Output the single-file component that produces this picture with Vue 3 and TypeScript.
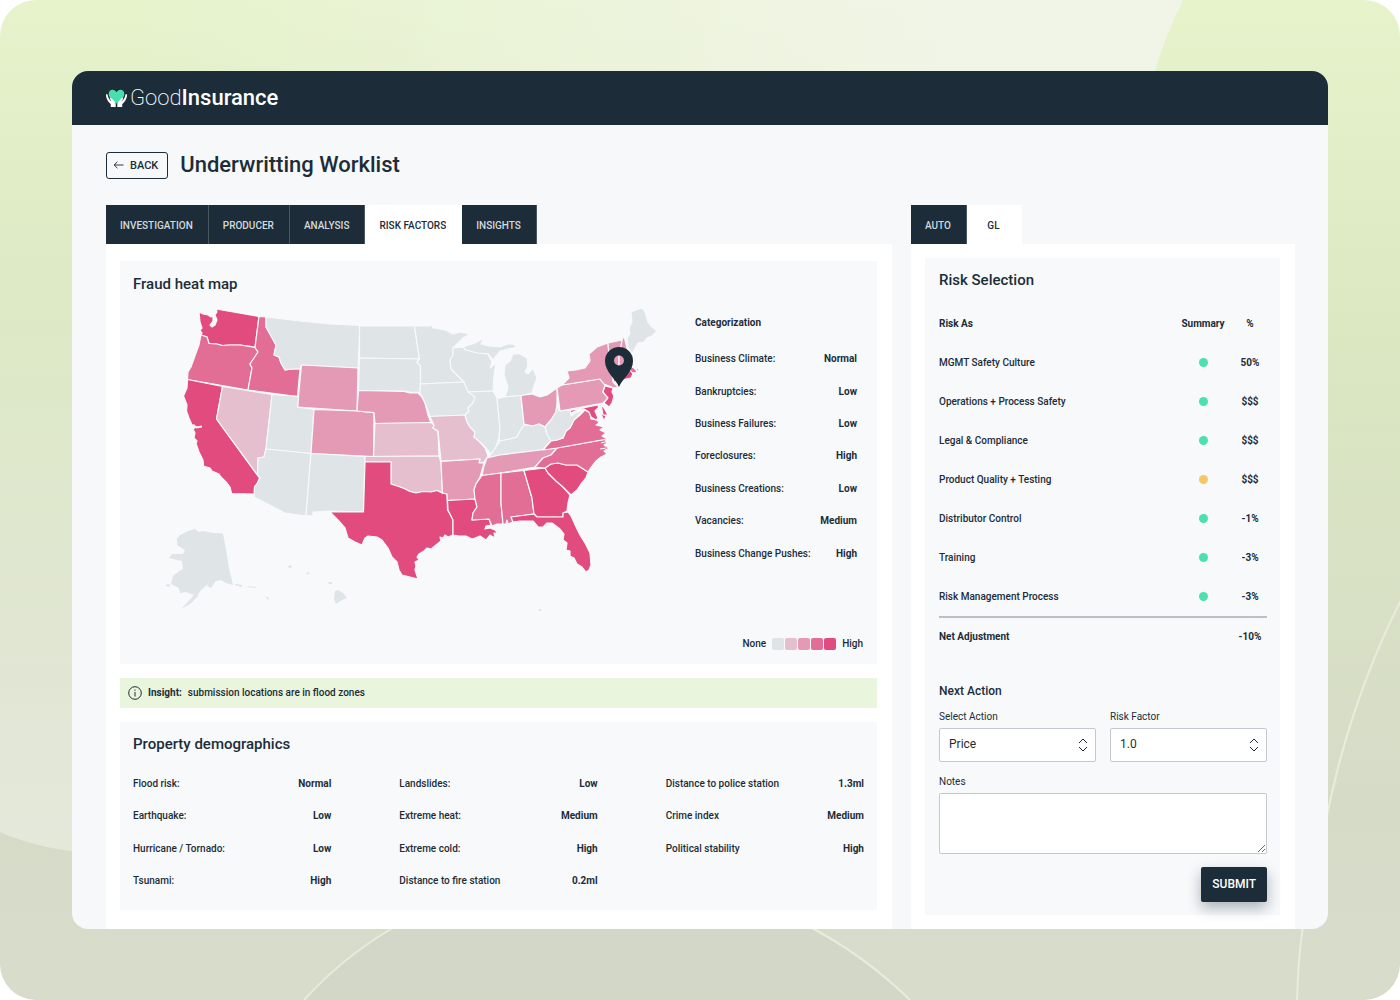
<script setup lang="ts">
import { ref } from 'vue'

interface Pair {
  label: string
  value: string
}

interface RiskRow {
  name: string
  status: 'good' | 'warn'
  value: string
}

interface Region {
  id: string
  level: 0 | 1 | 2 | 3 | 4
  d: string
}

const mainTabs = ['Investigation', 'Producer', 'Analysis', 'Risk factors', 'Insights']
const activeMain = ref('Risk factors')
const sideTabs = ['Auto', 'GL']
const activeSide = ref('GL')

const action = ref('Price')
const factor = ref('1.0')
const notes = ref('')

const categories: Pair[] = [
  { label: 'Business Climate:', value: 'Normal' },
  { label: 'Bankruptcies:', value: 'Low' },
  { label: 'Business Failures:', value: 'Low' },
  { label: 'Foreclosures:', value: 'High' },
  { label: 'Business Creations:', value: 'Low' },
  { label: 'Vacancies:', value: 'Medium' },
  { label: 'Business Change Pushes:', value: 'High' },
]

const demographics: Pair[] = [
  { label: 'Flood risk:', value: 'Normal' },
  { label: 'Earthquake:', value: 'Low' },
  { label: 'Hurricane / Tornado:', value: 'Low' },
  { label: 'Tsunami:', value: 'High' },
  { label: 'Landslides:', value: 'Low' },
  { label: 'Extreme heat:', value: 'Medium' },
  { label: 'Extreme cold:', value: 'High' },
  { label: 'Distance to fire station', value: '0.2ml' },
  { label: 'Distance to police station', value: '1.3ml' },
  { label: 'Crime index', value: 'Medium' },
  { label: 'Political stability', value: 'High' },
]

const risks: RiskRow[] = [
  { name: 'MGMT Safety Culture', status: 'good', value: '50%' },
  { name: 'Operations + Process Safety', status: 'good', value: '$$$' },
  { name: 'Legal & Compliance', status: 'good', value: '$$$' },
  { name: 'Product Quality + Testing', status: 'warn', value: '$$$' },
  { name: 'Distributor Control', status: 'good', value: '-1%' },
  { name: 'Training', status: 'good', value: '-3%' },
  { name: 'Risk Management Process', status: 'good', value: '-3%' },
]

const levels = [0, 1, 2, 3, 4]

const regions: Region[] = [
  { id: 'WA', level: 4, d: 'M199 312L203 314 208 315 211 317 213 316 213 321 210 325 212 327 215 325 217 320 215 315 217 312 216 309 259 316.5 255 347.5 249 346 240 345 230 345 222 345.5 217 344 209 343.5 207 337 201 335 202 333 200 330 202 328 200 322Z' },
  { id: 'OR', level: 3, d: 'M201 335L207 337 209 343.5 217 344 222 345.5 230 345 240 345 255 347.5 258 352 255 357 250 364 252 368 248 390 187.5 379.5 188 372 191 367 196 353 199 345Z' },
  { id: 'CA', level: 4, d: 'M187.5 379.5L222.5 386.5 216.5 419 259.5 478 257 484 254.5 487 254.5 494 231.5 493.5 230 487 227 483 221 477 219 474 212 471 210 468 203.5 466 203 460 199 452 196 443.5 197 441 194 438 195 433 193 429 196 427 192 425 189 418 186.5 411 187 405 183.5 396 187 388Z' },
  { id: 'ID', level: 3, d: 'M259 316.5L266 317 266 327 271 336 276 345 274 355 279 357 281 363 285 370 292 369 298 369 300 368.5 297.5 396.5 248 390 252 368 250 364 258 352 255 347.5Z' },
  { id: 'NV', level: 1, d: 'M222.5 386.5L272 394.5 266 449 264 457 258 458 257.5 475 216.5 419Z' },
  { id: 'MT', level: 0, d: 'M266 317L300 321 330 324 360 325.5 358 368 301.5 365 300 368.5 298 369 292 369 285 370 281 363 279 357 274 355 276 345 271 336 266 327Z' },
  { id: 'WY', level: 2, d: 'M301.5 365L358 368 357 411 297.5 407Z' },
  { id: 'UT', level: 0, d: 'M272 394.5L298.5 396.5 297.5 407 314 409.5 311 453.5 266 449Z' },
  { id: 'CO', level: 2, d: 'M314 409.5L357 411 374 412.7 373.5 456.5 311 453.5Z' },
  { id: 'AZ', level: 0, d: 'M266 449L311 453.5 306 516 285 513 254 497 254.5 487 257 484 260 478 257.5 475 258 458 264 457Z' },
  { id: 'NM', level: 0, d: 'M311 453.5L365 456.5 363.5 512 330 511 313 512 313 516 306 515.5Z' },
  { id: 'ND', level: 0, d: 'M359.5 326L414.5 326 416 337 419.5 359 359.5 358Z' },
  { id: 'SD', level: 0, d: 'M359.5 358L419.5 359 417 362 420.5 366 420.5 384 420 392.5 410 392 405 391 358.5 390.5Z' },
  { id: 'NE', level: 2, d: 'M358.5 390.5L404 391.5 410 393 418 393 422 397 425 403 428 415 431 423 375 423.5 374 412.7 357 411Z' },
  { id: 'KS', level: 1, d: 'M375 423.5L431 422.5 434 425 433 428 438 431.5 439 456 373.5 456.5Z' },
  { id: 'OK', level: 1, d: 'M365 456.5L439 456 441 463 442.5 493 437 490.5 431 492 423 491.5 416 493 410 491.5 405 489 400 487 391 484 391 462 365 462Z' },
  { id: 'TX', level: 4, d: 'M365 462L391 462 391 484 400 487 405 489 410 491.5 416 493 423 491.5 431 492 437 490.5 442 493 447 494 447.5 510 450 514 453 520 453 535 448 537 445 535 443 538 440 537 441 541 436 545 431 549 427 548 424 551 419 554 417 557 419 560 415 562 416 566 415 570 418 579 410 577 402 575 399 570 397 562 392 557 388 548 382 540 377 537 368 536 365 538 362 545 355 542 348 538 345 528 338 520 330 512 363.5 512Z' },
  { id: 'MN', level: 0, d: 'M414.5 326L430 326 431.5 324 433 328 440 329 446.5 330.5 453 334 460 332 470 334 463 338 458 343 453 348 453 355 450 360 451 369 458 376 464 382 420.5 384 420.5 366 417 362 419.5 359Z' },
  { id: 'IA', level: 0, d: 'M420.5 384L464 382 467 388 470 392 475 397 473 403 468 408 469 411 465 415 430 416.5 425 403 420 392.5Z' },
  { id: 'MO', level: 1, d: 'M430 416.5L465 415 467 422 470 427 475 432 474 437 480 442 485 448 488 456 484 462 479 463 480 459 441 461 438 431 433 428 434 425Z' },
  { id: 'AR', level: 2, d: 'M441 461.5L480 459 479 463 484 463 482 470 480 477 476 484 474 490 475 499 447.5 500.5 447 494 442.5 493Z' },
  { id: 'LA', level: 4, d: 'M447.5 500.5L475 499 477 507 473 513 472 520 489 519 491 525 486 526 485 529 490 528 495 530 498 533 494 533 495 538 490 535 486 540 480 536 475 538 472 539 466 536 459 536 453 535 453 520 448 510Z' },
  { id: 'WI', level: 0, d: 'M453 348L463 347 466 350 478 353 488 354 490 358 492 362 490 368 496 363 494 375 493 391 468 392 464 382 458 376 451 369 450 360 453 355Z' },
  { id: 'MIU', level: 0, d: 'M463 347L475 343 484 338 481 344 489 346 500 347 507 344 513 344 517 347 508 349 500 351 496 356 493 360 488 354 478 353 466 350Z' },
  { id: 'MI', level: 0, d: 'M505 397L508 387 504 375 505 365 510 361 513 354 520 354 527 358 528 366 525 372 528 374 533 368 537 378 534 386 532 393 521 395.5Z' },
  { id: 'IL', level: 0, d: 'M468 392L493 391 497 398 500 428 499 438 496 447 491 454 487 449 480 442 474 437 475 432 470 427 467 422 465 415 469 411 468 408 473 403 475 397Z' },
  { id: 'IN', level: 0, d: 'M497 399L504 397 521 395.5 524 425 520 431 517 437 510 439 500 441 499 438 500 428Z' },
  { id: 'OH', level: 2, d: 'M521 395.5L532 394 540 397 547 395 557 388 557 403 556 412 551 420 545 427 539 424 533 426 524 424Z' },
  { id: 'KY', level: 0, d: 'M488 458L491 454 496 447 500 441 510 439 517 437 520 431 524 425 533 426 539 424 545 427 547 434 551 440 543 449.5 500 455Z' },
  { id: 'TN', level: 2, d: 'M487 458L500 455 557 448 551 455 543 458 535 467 501 473 482 475.5 484 466Z' },
  { id: 'MS', level: 3, d: 'M482 475.5L501 473 501 503 503 524 497 524 492 526 489 519 472 520 473 513 477 507 475 499 474 490 476 484Z' },
  { id: 'AL', level: 3, d: 'M501 473L524 470.5 532 498 534 514 511 517 513 522 508 524 507 520 506 524 503 524 501 503Z' },
  { id: 'GA', level: 4, d: 'M524 470.5L545 468 548 473 556 481 563 487 570 495 568 503 567 511 563 513 563 517 537 517 534 514 532 498Z' },
  { id: 'FL', level: 4, d: 'M511 517L534 514 537 517 563 517 563 513 568 512 571 516 577 529 580 535 585 543 590 553 591 565 589 570 586 572 582 567 577 564 574 558 570 556 570 551 566 550 567 543 563 540 564 534 560 529 552 523 547 523 543 527 538 527 533 521 527 521 520 521 513 522Z' },
  { id: 'SC', level: 4, d: 'M545 468L551 464 558 463 566 465 577 465 588 472 586 478 581 484 577 490 571 495 563 487 556 481 548 473Z' },
  { id: 'NC', level: 3, d: 'M557 448L605 439.5 607 443 604 445 609 448 604 451 607 454 601 457 596 461 592 466 588 472 577 465 566 465 558 463 551 464 545 468 535 467 543 458 551 455Z' },
  { id: 'VA', level: 3, d: 'M543 450L551 441 557 440 563 438 566 431 570 428 574 420 580 415 585 410 590 413 591 419 597 420 599 423 596 425 604 427 600 430 606 433 602 436 607 439 557 448Z' },
  { id: 'WV', level: 0, d: 'M557 405L559 411 570 410 571 416 575 413 583 410 578 416 574 420 570 428 566 431 563 438 557 440 551 441 547 434 545 427 551 420 556 412Z' },
  { id: 'PA', level: 2, d: 'M557 388L562 385 600 379 605 385 603 392 608 398 603 403 560 411Z' },
  { id: 'NY', level: 2, d: 'M562 385L569 378 567 371 576 370 585 368 590 361 589 354 597 347 608 343 609 355 612 366 613 382 618 387 614 388 604 384 600 379Z' },
  { id: 'NJ', level: 4, d: 'M605 386L613 388 612 392 614 396 612 403 609 407 604 403 608 398 603 392Z' },
  { id: 'MD', level: 4, d: 'M570 410.5L598 405 600 412 606 416 604 421 601 414 598 408 595 411 598 418 596 420 591 417 589 412 584 409 577 410 571 413Z' },
  { id: 'DE', level: 4, d: 'M601 404L604 408 608 415 603 415Z' },
  { id: 'VT', level: 2, d: 'M608 343L622 340 621 347 619 353 619 369 612 369 609 355Z' },
  { id: 'NH', level: 2, d: 'M622 340L624 336 628 352 631 366 619 369 619 353 621 347Z' },
  { id: 'MA', level: 3, d: 'M612 369L630 366 634 368 637 371 636 366 639 370 635 373 630 372 612 375Z' },
  { id: 'CT', level: 4, d: 'M612 375L630 370 633 374 631 378 626 379 614 382Z' },
  { id: 'ME', level: 0, d: 'M627 338L630 334 629 328 632 322 631 312 636 310 642 308 645 312 648 322 651 326 657 331 652 336 647 338 644 342 638 343 635 348 632 354 628 347Z' },
]

const islands = [
  'M177 539L180 535 184 533 188 531 195 529 199 532 203 531 213 533 223 533.500 226 550 229 568 233 585 226 583 221 580 216 581 211 588 207 586 209 583 201 590 197 596 200 594 190 604 181 609 187 603 194 595 186 592 180 593 179 588 171 584 173 576 178 572 183 569 182 561 169 558 172 554 183 554 185 550 177 545Z',
  'M335 591L338 590 343 593 347 598 340 601 336 604 334 599Z',
  'M288 566l3 -1 1 2 -3 1ZM306 574l2 -2 2 1 -3 2ZM328 582l4 0 0 2 -3 0ZM170 584l-5 1 4 2ZM235 584l7 1 0 2 -7 -2ZM247 586l9 1 0 1 -8 -1ZM265 596l4 2 -1 2ZM539 609l2 0 0 2 -2 0Z',
]
</script>

<template>
  <div class="stage">
    <svg class="backdrop" viewBox="0 0 1400 1000" preserveAspectRatio="none" aria-hidden="true">
      <defs>
        <linearGradient id="base" x1="0" y1="0" x2="0" y2="1">
          <stop offset="0" stop-color="#e6f3cb" />
          <stop offset="0.35" stop-color="#dae7c1" />
          <stop offset="0.8" stop-color="#d6dbc8" />
          <stop offset="1" stop-color="#d8dccb" />
        </linearGradient>
        <linearGradient id="disc" x1="0" y1="0" x2="0" y2="1">
          <stop offset="0" stop-color="#eef1e6" stop-opacity="0" />
          <stop offset="1" stop-color="#eef1e6" stop-opacity="0.6" />
        </linearGradient>
        <linearGradient id="glow" x1="0" y1="0" x2="1" y2="0">
          <stop offset="0.1" stop-color="#f2f5ea" stop-opacity="0" />
          <stop offset="0.8" stop-color="#f2f5ea" stop-opacity="0.9" />
        </linearGradient>
      </defs>
      <rect width="1400" height="1000" fill="url(#base)" />
      <path d="M0 0H1183Q1165 36 1152 80V300H0Z" fill="url(#glow)" />
      <path d="M0 200V832Q36 848 80 852V200Z" fill="url(#disc)" />
      <path d="M304 1000Q344 956 396 926H808Q864 955 910 1000Z" fill="#cdd1c0" opacity="0.45" />
      <g fill="none" stroke="#e9ecda" stroke-width="2">
        <path d="M304 1000Q344 956 396 926" />
        <path d="M808 926Q864 955 910 1000" />
        <path d="M1297 1000Q1298 960 1303 926" />
        <path d="M1326 820Q1350 700 1402 598" />
      </g>
    </svg>

    <div class="window">
      <header class="topbar">
        <a class="brand" href="#">
          <svg class="brand-mark" viewBox="0 0 21 19" aria-hidden="true">
            <path d="M10.5 14.5C5 10.5 2.700 7.800 2.700 4.900 2.700 2.400 4.500.8 6.600.8c1.700 0 3.100.9 3.900 2.400C11.300 1.700 12.700.8 14.400.8c2.100 0 3.900 1.600 3.900 4.100 0 2.900-2.300 5.600-7.800 9.600Z" fill="#47dfae" />
            <path d="M.7 5C-.2 5.300 0 6.800.3 8.200c.6 2.600 1.900 4.700 4.400 6.700L4.800 18h4.900v-2.600c0-1.600-.6-2.500-1.600-3.400L5.200 9c-.9-.8-1.800.1-1.200 1l1.600 2.500C3.400 11 2.200 9 1.600 5.700 1.500 5.100 1 4.900.7 5Z" fill="#fff" />
            <path d="M20.300 5c.9.3.7 1.800.4 3.200-.6 2.600-1.900 4.700-4.400 6.700l-.1 3.100h-4.900v-2.600c0-1.600.6-2.500 1.600-3.400l2.900-3c.9-.8 1.800.1 1.200 1l-1.600 2.500c2.200-1.500 3.400-3.500 4-6.800.1-.6.600-.8.900-.7Z" fill="#fff" />
          </svg>
          <span class="brand-name"><span class="thin">Good</span><span class="strong">Insurance</span></span>
        </a>
      </header>

      <main class="content">
        <div class="title-row">
          <button type="button" class="back">
            <svg viewBox="0 0 12 10" aria-hidden="true">
              <path d="M11.500 5H1.200M4.800 1.500L1.200 5l3.600 3.500" fill="none" stroke="currentColor" />
            </svg>
            BACK
          </button>
          <h1>Underwritting Worklist</h1>
        </div>

        <div class="columns">
          <section class="column">
            <nav class="tabs">
              <button
                v-for="tab in mainTabs"
                :key="tab"
                type="button"
                class="tab"
                :class="{ active: tab === activeMain }"
                @click="activeMain = tab"
              >{{ tab.toUpperCase() }}</button>
            </nav>
            <div class="panel main-panel">
              <section class="card map-card">
                <h2>Fraud heat map</h2>
                <div class="map-grid">
                  <svg class="map" viewBox="133 300 548 314" role="img" aria-label="Fraud heat map of the United States">
                    <path v-for="r in regions" :key="r.id" :d="r.d" :class="['region', `fill-${r.level}`]" />
                    <path v-for="d in islands" :key="d" :d="d" class="fill-0" />
                    <path d="M185 426L194 425 196 427 202 426M202 427L196 428" class="inlet" />
                    <path d="M600 406L599 412 602 422M609 441L601 443M606 448L600 449" class="inlet" />
                    <path
                      fill-rule="evenodd"
                      d="M619 387C616 379 605 372 605 361a14 14 0 0 1 28 0C633 372 622 379 619 387ZM619 355.500a5 5 0 1 0 0 10 5 5 0 0 0 0-10Z"
                      class="pin"
                    />
                  </svg>
                  <div class="categories">
                    <h3>Categorization</h3>
                    <dl>
                      <div v-for="c in categories" :key="c.label" class="pair">
                        <dt>{{ c.label }}</dt>
                        <dd>{{ c.value }}</dd>
                      </div>
                    </dl>
                  </div>
                </div>
                <div class="legend">
                  <span>None</span>
                  <span class="scale"><i v-for="n in levels" :key="n" :class="`swatch-${n}`"></i></span>
                  <span>High</span>
                </div>
              </section>

              <p class="insight">
                <svg viewBox="0 0 14 14" aria-hidden="true">
                  <circle cx="7" cy="7" r="6.300" fill="none" stroke="currentColor" />
                  <path d="M7 6v4.500M7 3.500v1.300" stroke="currentColor" />
                </svg>
                <strong>Insight:</strong>
                <span>submission locations are in flood zones</span>
              </p>

              <section class="card demo-card">
                <h2>Property demographics</h2>
                <dl class="demo-grid">
                  <div v-for="d in demographics" :key="d.label" class="pair">
                    <dt>{{ d.label }}</dt>
                    <dd>{{ d.value }}</dd>
                  </div>
                </dl>
              </section>
            </div>
          </section>

          <section class="column">
            <nav class="tabs">
              <button
                v-for="tab in sideTabs"
                :key="tab"
                type="button"
                class="tab"
                :class="{ active: tab === activeSide }"
                @click="activeSide = tab"
              >{{ tab.toUpperCase() }}</button>
            </nav>
            <div class="panel side-panel">
              <div class="card side-card">
                <h2>Risk Selection</h2>
                <table>
                  <thead>
                    <tr>
                      <th scope="col">Risk As</th>
                      <th scope="col" class="summary">Summary</th>
                      <th scope="col" class="amount">%</th>
                    </tr>
                  </thead>
                  <tbody>
                    <tr v-for="r in risks" :key="r.name">
                      <td>{{ r.name }}</td>
                      <td class="summary"><span class="dot" :class="r.status"></span></td>
                      <td class="amount">{{ r.value }}</td>
                    </tr>
                  </tbody>
                  <tfoot>
                    <tr>
                      <th scope="row" colspan="2">Net Adjustment</th>
                      <td class="amount">-10%</td>
                    </tr>
                  </tfoot>
                </table>

                <form @submit.prevent>
                  <h3>Next Action</h3>
                  <div class="fields">
                    <div class="field">
                      <label for="action">Select Action</label>
                      <div class="select">
                        <select id="action" v-model="action">
                          <option>Price</option>
                          <option>Decline</option>
                        </select>
                        <svg viewBox="0 0 10 14" aria-hidden="true">
                          <path d="M1 5l4-4 4 4M1 9l4 4 4-4" fill="none" stroke="currentColor" />
                        </svg>
                      </div>
                    </div>
                    <div class="field">
                      <label for="factor">Risk Factor</label>
                      <div class="select">
                        <select id="factor" v-model="factor">
                          <option>1.0</option>
                          <option>1.5</option>
                        </select>
                        <svg viewBox="0 0 10 14" aria-hidden="true">
                          <path d="M1 5l4-4 4 4M1 9l4 4 4-4" fill="none" stroke="currentColor" />
                        </svg>
                      </div>
                    </div>
                  </div>
                  <div class="field notes">
                    <label for="notes">Notes</label>
                    <textarea id="notes" v-model="notes"></textarea>
                  </div>
                  <button type="submit" class="submit">SUBMIT</button>
                </form>
              </div>
            </div>
          </section>
        </div>
      </main>
    </div>
  </div>
</template>

<style>
body {
  margin: 0;
  background: #fff;
}
</style>

<style scoped>
.stage {
  position: relative;
  box-sizing: border-box;
  min-height: 100vh;
  padding: 71px 72px;
  border-radius: 36px;
  overflow: hidden;
  font-family: Roboto, 'Liberation Sans', sans-serif;
  font-size: 10px;
  font-weight: 500;
  line-height: 16px;
  color: #1c2d39;
}

.stage * {
  box-sizing: border-box;
}

.backdrop {
  position: absolute;
  inset: 0;
  width: 100%;
  height: 100%;
}

.window {
  position: relative;
  border-radius: 16px;
  overflow: hidden;
  background: #f6f8fa;
}

.topbar {
  display: flex;
  align-items: center;
  height: 54px;
  padding: 0 34px;
  background: #1c2d39;
}

.brand {
  display: flex;
  align-items: center;
  gap: 3px;
  color: #fff;
  text-decoration: none;
}

.brand-mark {
  width: 21px;
  height: 19px;
}

.brand-name {
  font-size: 22px;
  line-height: 28px;
}

.thin {
  font-weight: 200;
}

.strong {
  font-weight: 500;
}

.content {
  padding: 26px 33px 0 34px;
}

.title-row {
  display: flex;
  align-items: center;
  gap: 12px;
  height: 28px;
  margin-bottom: 26px;
}

h1,
h2,
h3,
p,
dl,
dd {
  margin: 0;
}

h1 {
  font-size: 22px;
  line-height: 28px;
  font-weight: 500;
}

h2 {
  font-size: 15px;
  line-height: 20px;
  font-weight: 500;
}

button {
  font-family: inherit;
  font-weight: 500;
  cursor: pointer;
}

.back {
  display: flex;
  align-items: center;
  gap: 6px;
  height: 27px;
  padding: 0 9px 0 6px;
  border: 1px solid #1c2d39;
  border-radius: 3px;
  background: transparent;
  color: inherit;
  font-size: 11px;
}

.back svg {
  width: 11px;
  height: 10px;
}

.columns {
  display: grid;
  grid-template-columns: minmax(0, 786fr) minmax(0, 384fr);
  gap: 19px;
}

.column {
  display: flex;
  flex-direction: column;
}

.tabs {
  display: flex;
}

.tab {
  min-width: 55px;
  height: 39px;
  padding: 1px 15px 0 14px;
  border: 1px solid #4b5862;
  border-width: 0 1px 0 0;
  background: #1c2d39;
  color: #d3d9dd;
  font-size: 10px;
}

.tab.active {
  border-color: #fff;
  background: #fff;
  color: #1c2d39;
}

.panel {
  flex: 1;
  background: #fff;
}

.main-panel {
  display: flex;
  flex-direction: column;
  gap: 14px;
  padding: 17px 15px 19px 14px;
}

.side-panel {
  padding: 14px 15px 14px 14px;
}

.card {
  background: #f7f9fb;
}

.map-card {
  padding: 13px 14px 12px 13px;
}

.map-grid {
  display: grid;
  grid-template-columns: minmax(0, 1fr) 162px;
  gap: 14px;
  margin: 6px 6px 0 0;
}

.map {
  display: block;
  width: 100%;
}

.region {
  stroke: #f7f9fb;
  stroke-width: 1.2;
  stroke-linejoin: round;
}

.fill-0 {
  fill: #dfe4e6;
}

.fill-1 {
  fill: #e5bfce;
}

.fill-2 {
  fill: #e49ab5;
}

.fill-3 {
  fill: #e26d95;
}

.fill-4 {
  fill: #e24b7d;
}

.inlet {
  fill: none;
  stroke: #f7f9fb;
  stroke-width: 1.2;
}

.pin {
  fill: #1c2d39;
}

.categories {
  padding-top: 15px;
}

.categories h3 {
  margin-bottom: 12px;
  font-size: 10px;
  line-height: 16px;
  font-weight: 700;
}

.categories dl {
  display: flex;
  flex-direction: column;
  height: 227px;
}

.pair {
  display: flex;
  flex: 1;
  align-items: center;
  justify-content: space-between;
  white-space: nowrap;
}

dd {
  font-weight: 700;
}

.legend {
  display: flex;
  justify-content: flex-end;
  gap: 6px;
  margin-top: 22px;
}

.scale {
  display: flex;
  align-items: center;
  gap: 1px;
}

.scale i {
  width: 12px;
  height: 12px;
  border-radius: 2px;
}

.swatch-0 {
  background: #dfe4e6;
}

.swatch-1 {
  background: #e5bfce;
}

.swatch-2 {
  background: #e49ab5;
}

.swatch-3 {
  background: #e26d95;
}

.swatch-4 {
  background: #e24b7d;
}

.insight {
  display: flex;
  align-items: center;
  gap: 6px;
  height: 30px;
  padding: 0 8px;
  background: #e9f5dc;
}

.insight svg {
  width: 14px;
  height: 14px;
}

.insight strong {
  font-weight: 700;
}

.demo-card {
  padding: 12px 13px 13px;
}

.demo-grid {
  display: grid;
  grid-auto-flow: column;
  grid-template-rows: repeat(4, 1fr);
  grid-template-columns: repeat(3, minmax(0, 1fr));
  column-gap: 68px;
  height: 129px;
  margin-top: 14px;
}

.side-card {
  padding: 12px 13px 13px 14px;
}

table {
  width: 100%;
  margin-top: 14px;
  border-collapse: separate;
  border-spacing: 0;
  table-layout: fixed;
}

th,
td {
  height: 39px;
  padding: 0;
  text-align: left;
}

.summary {
  width: 60px;
  text-align: center;
}

.amount {
  width: 34px;
  text-align: center;
  font-weight: 700;
}

.dot {
  display: inline-block;
  width: 9px;
  height: 9px;
  border-radius: 50%;
  vertical-align: middle;
}

.good {
  background: #4be0b0;
}

.warn {
  background: #f5c867;
}

tfoot th,
tfoot td {
  height: 40px;
  border-top: 2px solid #b9c0c6;
}

form {
  display: flex;
  flex-direction: column;
}

form h3 {
  margin-top: 27px;
  font-size: 12px;
  line-height: 16px;
  font-weight: 500;
}

.fields {
  display: grid;
  grid-template-columns: 1fr 1fr;
  gap: 14px;
  margin-top: 10px;
}

.field {
  display: flex;
  flex-direction: column;
  gap: 3px;
}

.notes {
  margin-top: 12px;
}

.select {
  position: relative;
}

.select select {
  display: block;
  width: 100%;
  height: 34px;
  padding: 0 28px 2px 9px;
  border: 1px solid #c3c9cf;
  border-radius: 2px;
  background: #fff;
  color: inherit;
  font-family: inherit;
  font-size: 12px;
  appearance: none;
}

.select svg {
  position: absolute;
  top: 10px;
  right: 8px;
  width: 10px;
  height: 14px;
  pointer-events: none;
}

label {
  font-weight: 400;
}

textarea {
  display: block;
  width: 100%;
  height: 61px;
  padding: 8px 9px;
  border: 1px solid #c3c9cf;
  border-radius: 2px;
  background: #fff;
  color: inherit;
  font-family: inherit;
  font-size: 12px;
  resize: vertical;
}

.submit {
  align-self: flex-end;
  height: 35px;
  margin-top: 13px;
  padding: 0 11px 2px;
  border: 0;
  border-radius: 2px;
  background: #1c2d39;
  box-shadow: 0 6px 14px rgba(28, 45, 57, 0.35);
  color: #fff;
  font-size: 12px;
}
</style>
